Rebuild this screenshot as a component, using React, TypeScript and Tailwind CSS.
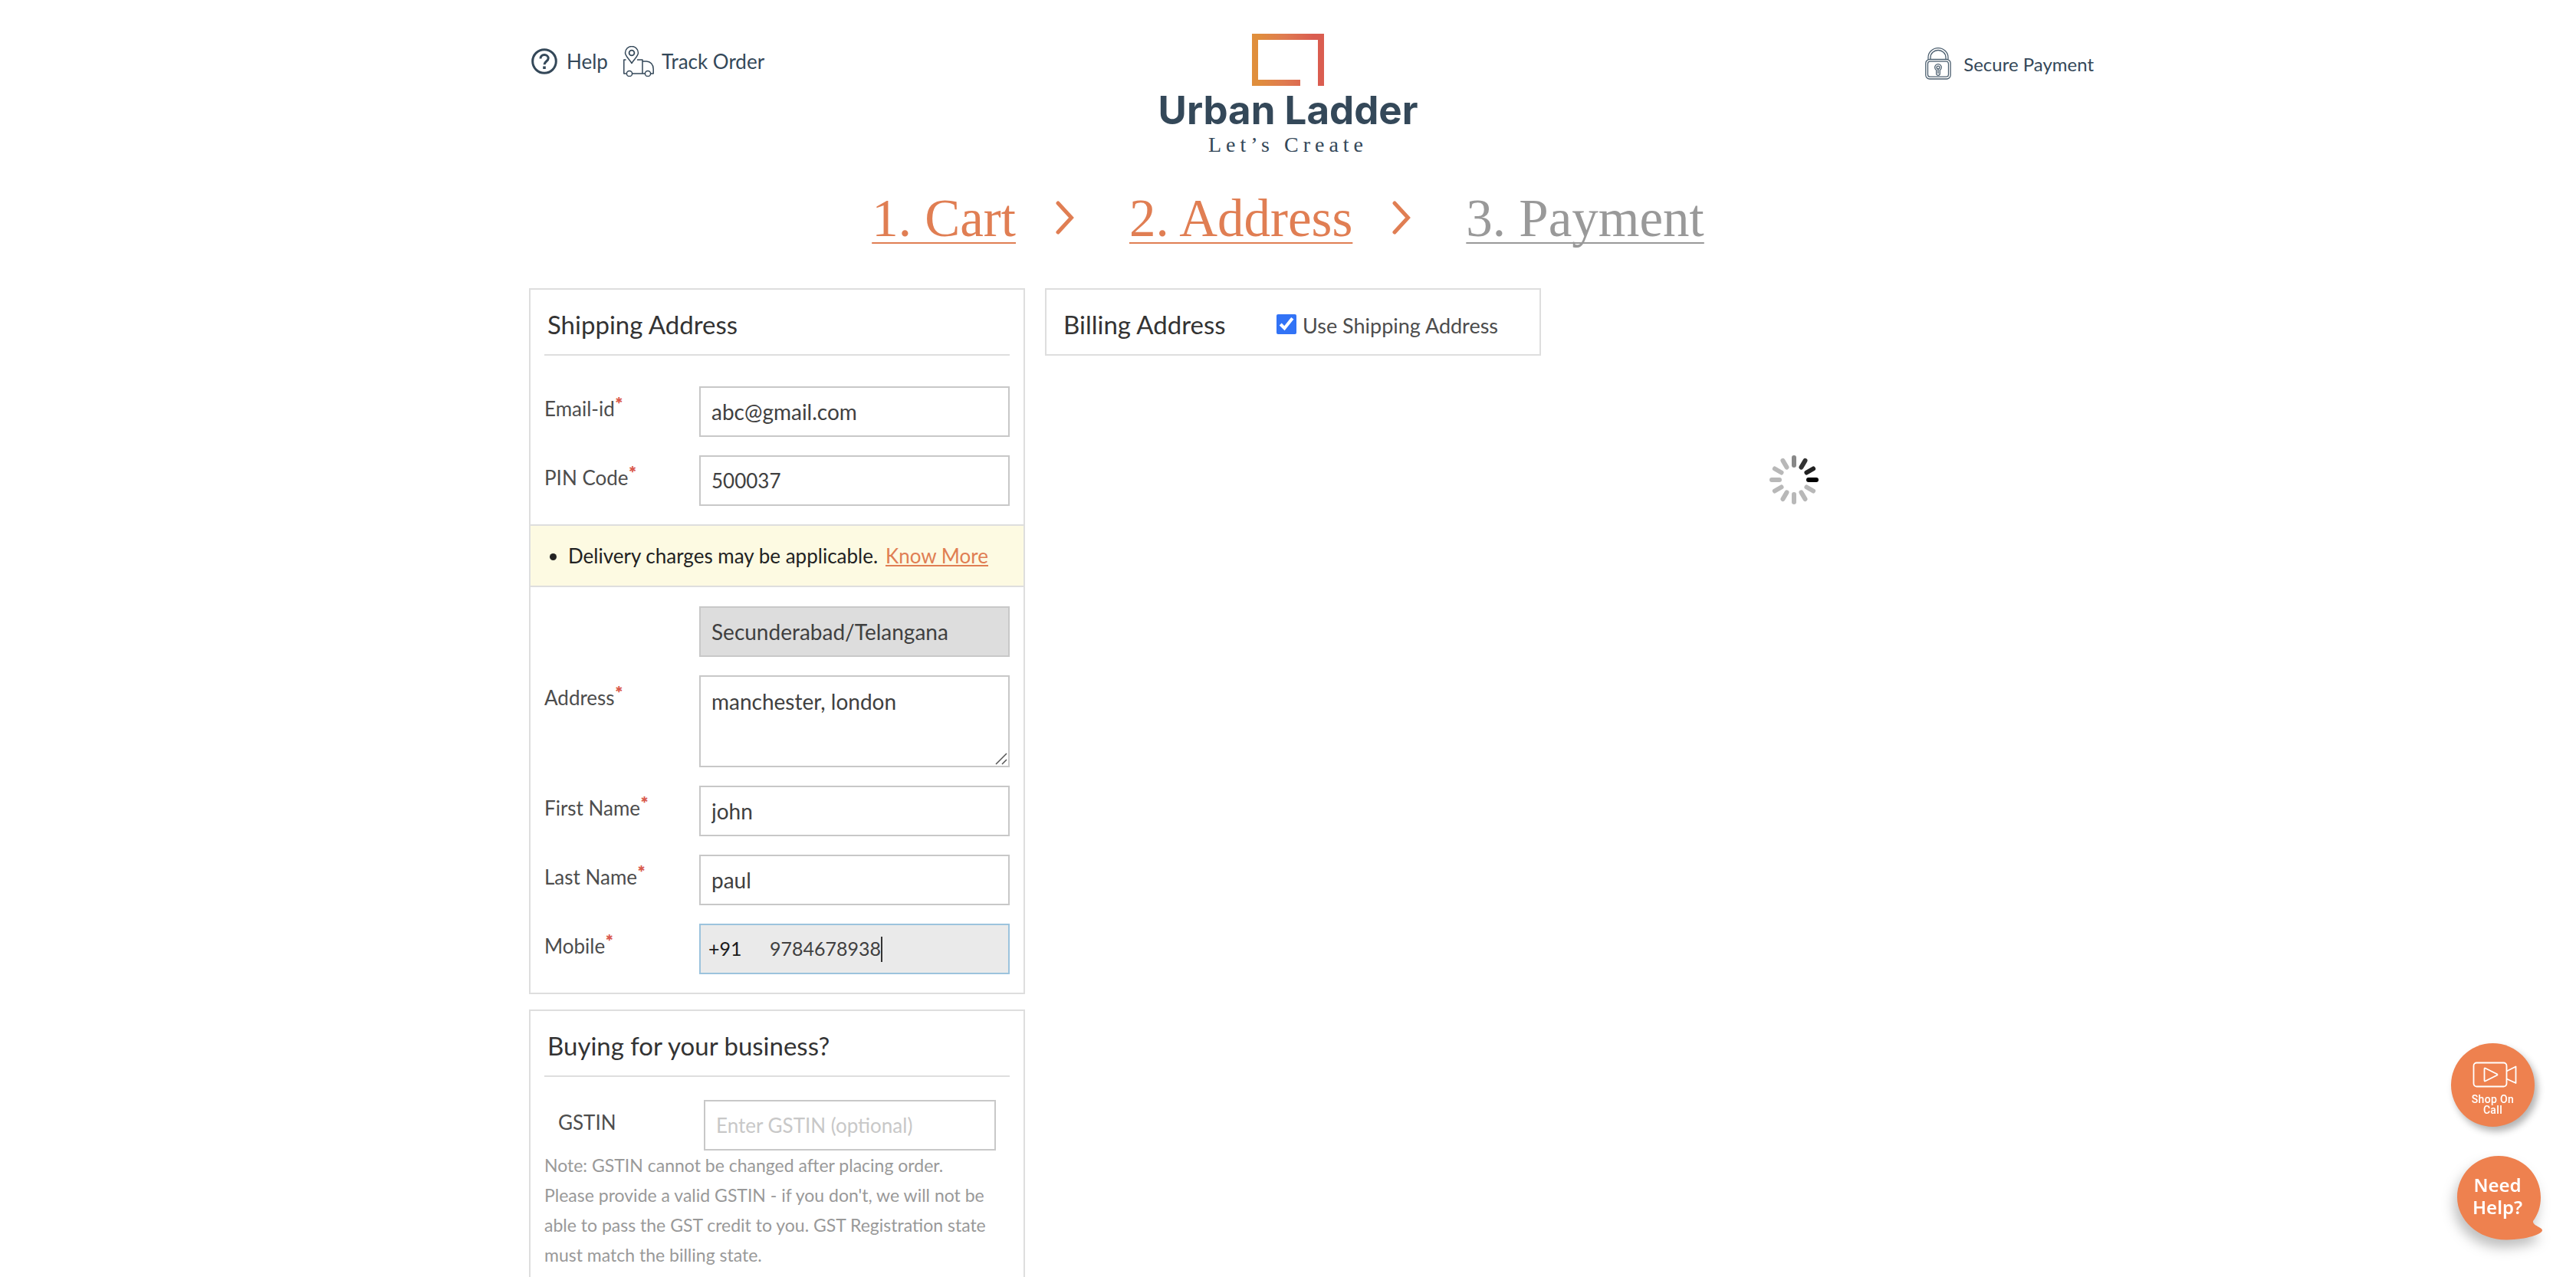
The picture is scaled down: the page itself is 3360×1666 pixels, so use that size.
import type { ReactNode } from "react";

const fieldClass =
  "block h-[66px] w-full rounded-none border-2 border-[#c8c8c8] bg-white px-[14px] text-[#404040] outline-none placeholder:text-[#c8c8c8] placeholder:opacity-100";

function Field({ id, label, children }: { id: string; label?: string; children: ReactNode }) {
  return (
    <div className="flex items-start">
      <div className="w-[202px] shrink-0">
        {label && (
          <label htmlFor={id} className="text-[26px] leading-[58px] text-[#4d4d4d]">
            {label}
            <sup className="font-['Inter'] text-[20px] font-bold text-[#d9594c]">*</sup>
          </label>
        )}
      </div>
      <div className="min-w-0 flex-1">{children}</div>
    </div>
  );
}

function HelpIcon() {
  return (
    <svg viewBox="0 0 34 34" className="size-[34px]" fill="none" stroke="#344859" strokeWidth="3">
      <circle cx="17" cy="17" r="15.3" />
      <path d="M12 13.5c0-3.2 2.2-5 5-5s5.2 1.900 5.200 4.600c0 3.700-5.200 4.200-5.200 8.200" />
      <path d="M17 23.500v3.500" strokeWidth="3.600" />
    </svg>
  );
}

function TruckIcon() {
  return (
    <svg viewBox="0 0 40 40" className="size-10" fill="none" stroke="#344859" strokeWidth="1.500" strokeLinejoin="round">
      <path d="M11 22.500C8 17.500 2.500 13 2.500 9a8.500 8.500 0 0 1 17 0c0 4-5.500 8.500-8.500 13.500z" />
      <circle cx="11" cy="9" r="3.400" strokeWidth="1.800" />
      <path d="M3.500 18H.8v18h3M12 36h16M36 36h3.200v-6c0-6-4-10-9-10H25M18 18h7v18" />
      <circle cx="8" cy="36" r="3.600" />
      <circle cx="32" cy="36" r="3.600" />
    </svg>
  );
}

function LockIcon() {
  return (
    <svg viewBox="0 0 34 42" className="h-[42px] w-[34px]" fill="none" stroke="#4d6070" strokeWidth="1.300">
      <path d="M4 15.500V13a13 12.300 0 0 1 26 0v2.500M7 15.500V13a10 9.500 0 0 1 20 0v2.500" />
      <rect x=".8" y="15.500" width="32.400" height="25.500" rx="5" />
      <rect x="3.500" y="18.200" width="27" height="20" rx="3" />
      <path d="M14.700 29.500a4.300 4.300 0 1 1 4.600 0V34a2.300 2.300 0 0 1-4.600 0z" />
      <circle cx="17" cy="26" r="1.900" />
      <path d="M17 28v6" />
    </svg>
  );
}

function LogoMark() {
  return (
    <svg viewBox="0 0 94 68" className="h-[68px] w-[94px]">
      <defs>
        <linearGradient id="mark" x1="0" x2="94" y1="0" y2="0" gradientUnits="userSpaceOnUse">
          <stop offset="0.080" stopColor="#e08e3c" />
          <stop offset="0.450" stopColor="#df7b50" />
          <stop offset="0.850" stopColor="#da5d50" />
        </linearGradient>
      </defs>
      <path d="M0 0H94V68H86V8H8V60H63V68H0Z" fill="url(#mark)" />
    </svg>
  );
}

function Chevron() {
  return (
    <svg viewBox="0 0 24 44" className="mr-[72px] ml-[52px] h-[44px] w-6" fill="none" stroke="#e07e53" strokeWidth="5" strokeLinecap="round">
      <path d="M3 3L20.500 22L3 41" />
    </svg>
  );
}

const spokes = ["#888888", "#333333", "#222222", "#000000", "#b8b8b8", "#b8b8b8", "#b8b8b8", "#b8b8b8", "#b8b8b8", "#b8b8b8", "#b8b8b8", "#b8b8b8"];

function Spinner() {
  return (
    <svg viewBox="-32 -32 64 64" className="size-16" role="img" aria-label="Loading">
      {spokes.map((c, i) => (
        <line key={i} x1="0" y1="-19" x2="0" y2="-29" stroke={c} strokeWidth="6" strokeLinecap="round" transform={`rotate(${i * 30})`} />
      ))}
    </svg>
  );
}

function CardTitle({ children }: { children: ReactNode }) {
  return <h2 className="border-b-2 border-[#dedede] px-1 pt-[26px] pb-5 text-[33px] leading-[38px] text-[#333333]">{children}</h2>;
}

export default function App() {
  return (
    <div className="h-screen overflow-hidden bg-white font-['Lato',sans-serif]">
      <div className="mx-auto max-w-[2102px] pl-[61px]">
        <header className="-ml-[61px] grid grid-cols-[1fr_auto_1fr] items-start text-[#344859]">
          <nav className="flex items-center pt-[60px] pl-16 text-[26px] leading-10">
            <a href="#help" className="flex items-center gap-3">
              <HelpIcon />
              Help
            </a>
            <a href="#track" className="ml-5 flex items-center gap-[10px]">
              <TruckIcon />
              Track Order
            </a>
          </nav>
          <a href="#home" className="flex flex-col items-center pt-11">
            <LogoMark />
            <span className="font-['Inter'] text-[51px] leading-[64px] font-bold">Urban Ladder</span>
            <span className="font-['Liberation_Serif'] text-[28px] leading-[26px] tracking-[6px]">Let’s Create</span>
          </a>
          <div className="flex items-center justify-end gap-4 pt-[61px] text-[24px] leading-[42px]">
            <LockIcon />
            <span className="pt-[2px]">Secure Payment</span>
          </div>
        </header>

        <nav className="-ml-[61px] flex h-[174px] items-start justify-center pt-[42px] font-['Liberation_Serif'] text-[69px] leading-[82px]">
          <a href="#cart" className="text-[#e07e53] underline decoration-2 underline-offset-8 [text-decoration-skip-ink:none]">1. Cart</a>
          <span className="flex h-[80px] items-center"><Chevron /></span>
          <a href="#address" className="text-[#e07e53] underline decoration-2 underline-offset-8 [text-decoration-skip-ink:none]">2. Address</a>
          <span className="flex h-[80px] items-center"><Chevron /></span>
          <a href="#payment" className="text-[#999999] underline decoration-2 underline-offset-8 [text-decoration-skip-ink:none]">3. Payment</a>
        </nav>

        <main className="flex items-start">
          <div className="flex w-[647px] shrink-0 flex-col gap-5">
            <section className="border-2 border-[#dedede] pb-6">
              <div className="px-[18px]">
                <CardTitle>Shipping Address</CardTitle>
                <div className="flex flex-col gap-6 pt-10 pb-6">
                  <Field id="email" label="Email-id">
                    <input id="email" type="text" defaultValue="abc@gmail.com" className={`${fieldClass} text-[28px]`} />
                  </Field>
                  <Field id="pin" label="PIN Code">
                    <input id="pin" type="text" defaultValue="500037" className={`${fieldClass} text-[26px]`} />
                  </Field>
                </div>
              </div>
              <ul className="list-disc border-y-2 border-[#dedede] bg-[#fdfae2] pl-[49px] text-[26px] leading-[78px] text-[#222222]">
                <li>
                  Delivery charges may be applicable.
                  <a href="#charges" className="ml-[10px] text-[#e07e53] underline decoration-2 underline-offset-2">Know More</a>
                </li>
              </ul>
              <div className="flex flex-col gap-6 px-[18px] pt-[25px]">
                <Field id="city">
                  <input id="city" aria-label="City and state" type="text" readOnly defaultValue="Secunderabad/Telangana" className={`${fieldClass} bg-[#dddddd]! text-[28px]`} />
                </Field>
                <Field id="street" label="Address">
                  <div className="relative">
                    <textarea id="street" defaultValue="manchester, london" className={`${fieldClass} h-[120px]! resize-none py-[15px] text-[28px] leading-[34px]`} />
                    <svg viewBox="0 0 16 16" className="pointer-events-none absolute right-[3px] bottom-[3px] size-4" stroke="#555555" strokeWidth="1.500">
                      <path d="M1 15L15 1M9 15L15 9" />
                    </svg>
                  </div>
                </Field>
                <Field id="first" label="First Name">
                  <input id="first" type="text" defaultValue="john" className={`${fieldClass} text-[28px]`} />
                </Field>
                <Field id="last" label="Last Name">
                  <input id="last" type="text" defaultValue="paul" className={`${fieldClass} text-[28px]`} />
                </Field>
                <Field id="mobile" label="Mobile">
                  <div className="flex h-[66px] items-center border-2 border-[#9cc3dd] bg-[#eaeaea] pl-[10px] text-[25px]">
                    <span className="w-20 text-[#1a1a1a]">+91</span>
                    <input id="mobile" type="tel" defaultValue="9784678938" className="field-sizing-content bg-transparent text-[#404040] outline-none" />
                    <span className="h-[33px] w-[2px] bg-[#333333]" />
                  </div>
                </Field>
              </div>
            </section>

            <section className="border-2 border-[#dedede] px-[18px] pb-6">
              <CardTitle>Buying for your business?</CardTitle>
              <div className="flex items-start px-[18px] pt-[30px]">
                <label htmlFor="gstin" className="w-[190px] shrink-0 text-[26px] leading-[58px] text-[#4d4d4d]">GSTIN</label>
                <input id="gstin" type="text" placeholder="Enter GSTIN (optional)" className={`${fieldClass} text-[26px]`} />
              </div>
              <p className="text-[23px] leading-[39px] text-[#999999]">
                Note: GSTIN cannot be changed after placing order.
                <br />
                Please provide a valid GSTIN - if you don't, we will not be able to pass the GST credit to you. GST Registration state must match the billing state.
              </p>
            </section>
          </div>

          <section className="ml-[26px] flex h-[88px] w-[647px] shrink-0 items-center border-2 border-[#dedede] pt-[6px] pl-[22px]">
            <h2 className="w-[278px] text-[33px] leading-[38px] text-[#333333]">Billing Address</h2>
            <input id="same" type="checkbox" defaultChecked className="size-[26px] accent-[#3273f6]" />
            <label htmlFor="same" className="pt-1 pl-2 text-[27px] leading-[34px] text-[#4d4d4d]">Use Shipping Address</label>
          </section>

          <div className="flex flex-1 justify-center pt-[218px] pr-[62px]">
            <Spinner />
          </div>
        </main>
      </div>

      <button type="button" className="fixed right-[54px] bottom-[196px] flex size-[109px] flex-col items-center rounded-full bg-[#ee814f] pt-6 font-['Roboto'] text-[14px] leading-[14px] font-medium tracking-wide text-white shadow-[4px_6px_10px_rgba(0,0,0,0.3)]">
        <svg viewBox="0 0 58 34" className="mb-2 ml-1 h-[34px] w-[58px] shrink-0" fill="none" stroke="#fff" strokeWidth="1.800" strokeLinejoin="round">
          <rect x="1.500" y="1.500" width="43" height="31" rx="4" />
          <path d="M15.500 9.500Q15.500 8 17 8.700L32 16.200Q33 17 32 17.800L17 25.300Q15.500 26 15.500 24.500ZM44.500 12.500L56.500 6.500V28L44.500 22.500" />
        </svg>
        <span>Shop On</span>
        <span>Call</span>
      </button>

      <button type="button" className="fixed right-[42px] bottom-[47px] flex h-[112px] w-[114px] items-start pt-6 font-['Noto_Sans'] text-[24px] leading-[29px] font-semibold text-white">
        <svg viewBox="0 0 114 112" className="absolute inset-0 size-full drop-shadow-[-4px_10px_8px_rgba(0,0,0,0.25)]">
          <path d="M55 1C86 1 110 25 110 55C110 68 106 78 100 86C99 92 112 94 112 98C112 103 92 110 66 110.500C28 111 1 84 1 55C1 25 25 1 55 1Z" fill="#ee814f" />
        </svg>
        <span className="relative w-[107px] text-center">
          Need
          <br />
          Help?
        </span>
      </button>
    </div>
  );
}
